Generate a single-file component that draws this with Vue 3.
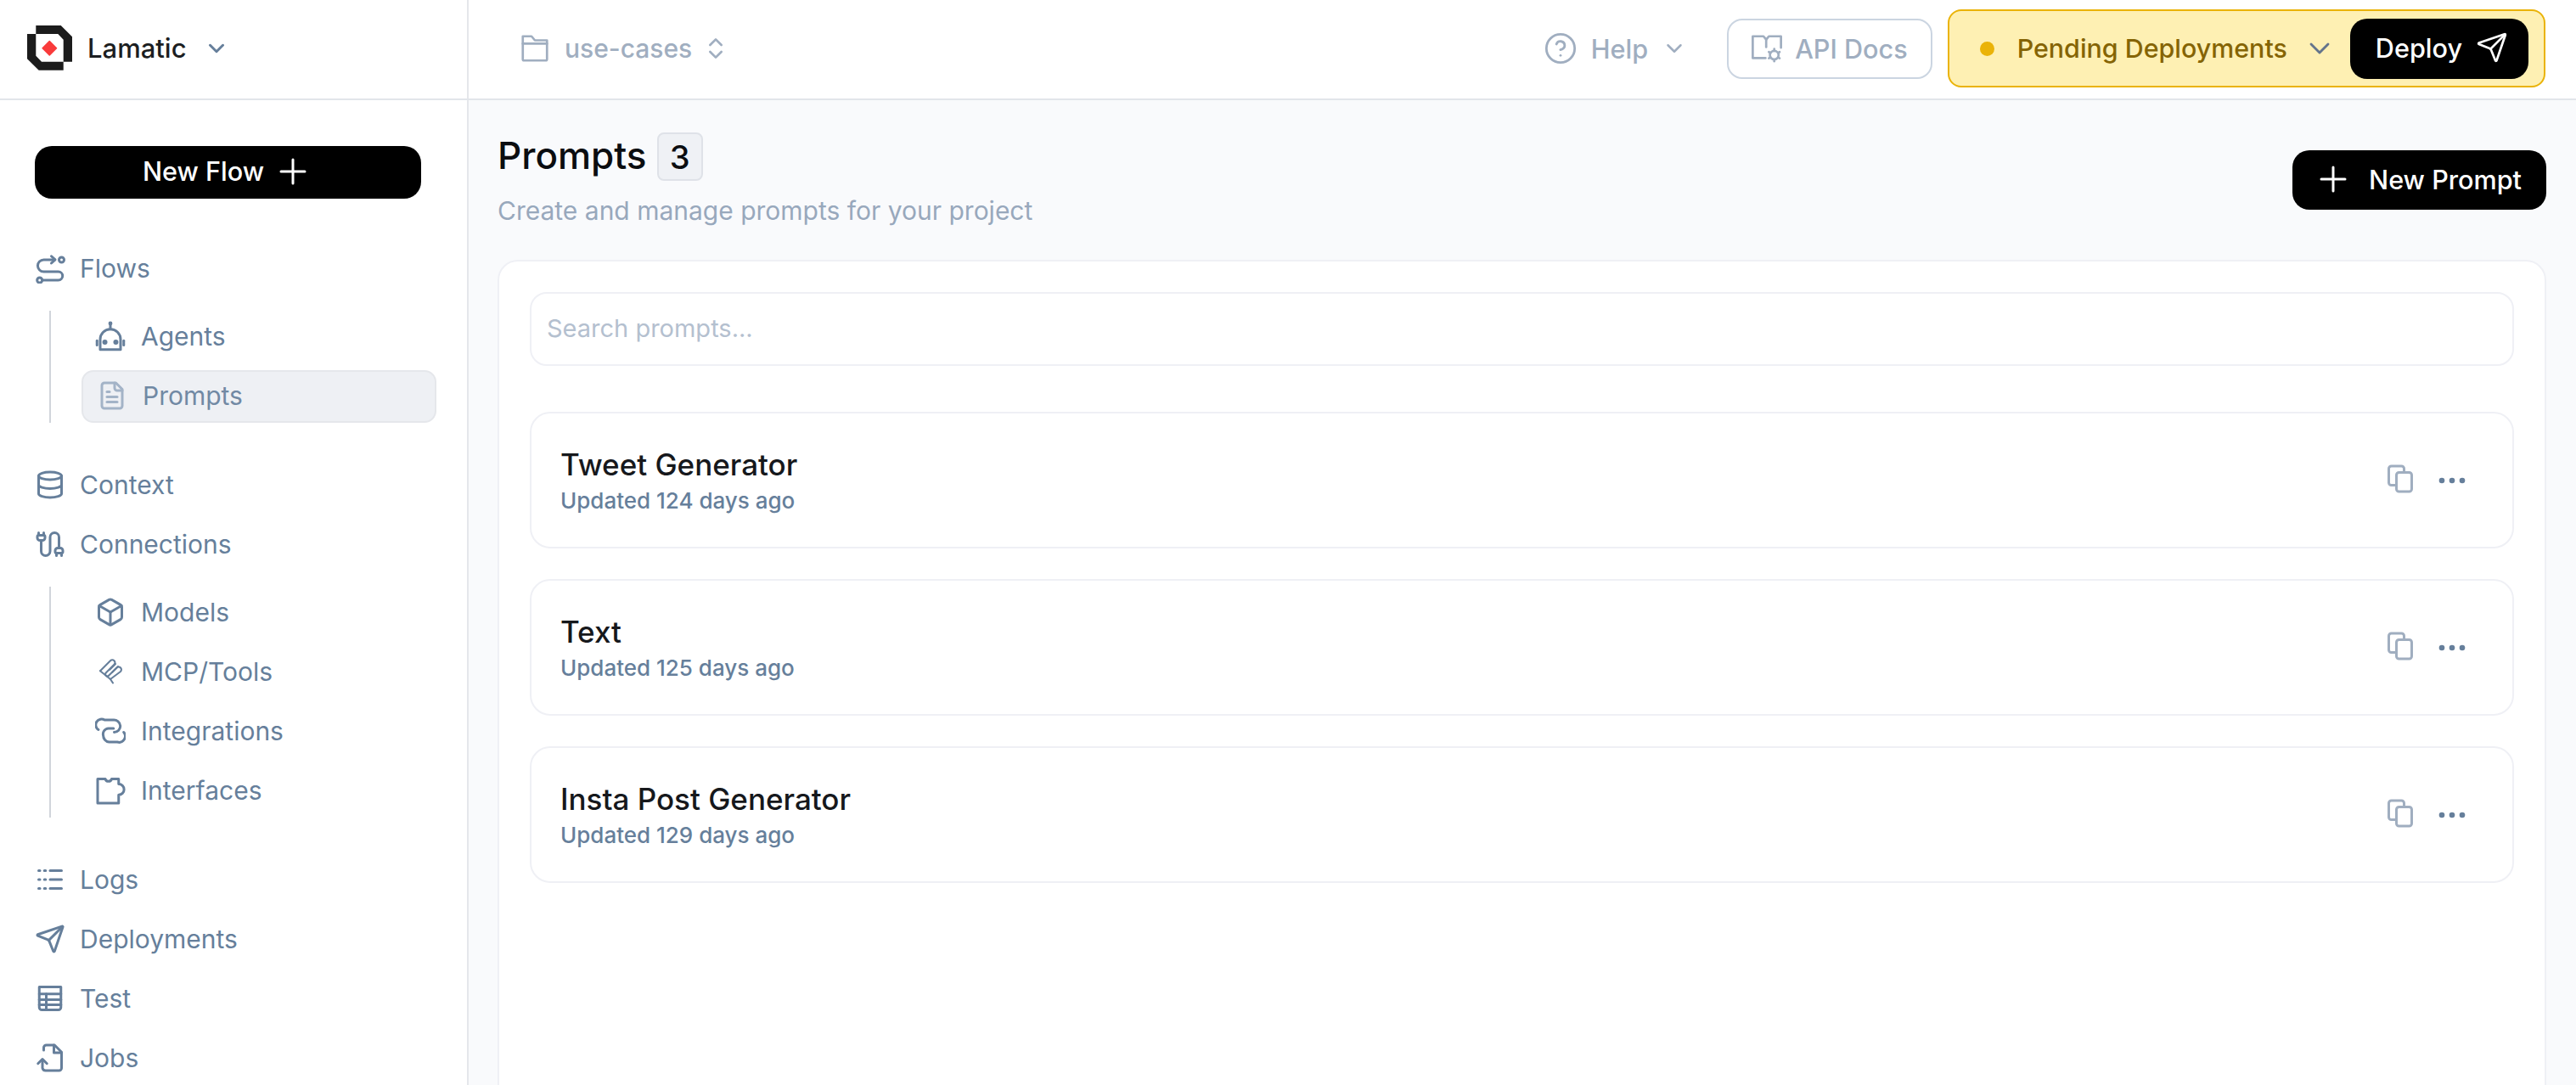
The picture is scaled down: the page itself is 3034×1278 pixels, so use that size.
<script setup>
import { h } from 'vue'

const paths = {
  flows: ['M15.5 5.3H7A4.7 4.7 0 0 0 7 14.7H18.5A3.3 3.3 0 0 1 18.5 21.3H6.5', 'M13 2.5 16 5.3 13 8', 'M23 5.3a2 2 0 1 1-4 0 2 2 0 0 1 4 0', 'M5.8 21.3a2 2 0 1 1-4 0 2 2 0 0 1 4 0'],
  bot: ['M4 22.5V14.5A8 8 0 0 1 20 14.5V22.5Z', 'M12 6.5V3', 'M12.6 2a.6.6 0 1 1-1.2 0 .6.6 0 0 1 1.2 0', 'M1.5 15.5V19', 'M22.5 15.5V19', 'M8.7 16.7a1 1 0 1 1-2 0 1 1 0 0 1 2 0', 'M17.3 16.7a1 1 0 1 1-2 0 1 1 0 0 1 2 0'],
  file: ['M15 2H6a2 2 0 0 0-2 2v16a2 2 0 0 0 2 2h12a2 2 0 0 0 2-2V7Z', 'M14 2v4a2 2 0 0 0 2 2h4', 'M10 9H8', 'M16 13H8', 'M16 17H8'],
  db: ['M21 5c0 1.66-4 3-9 3S3 6.66 3 5s4-3 9-3 9 1.34 9 3', 'M3 5V19A9 3 0 0 0 21 19V5', 'M3 12A9 3 0 0 0 21 12'],
  cable: ['M17 21v-2a1 1 0 0 1-1-1v-1a2 2 0 0 1 2-2h2a2 2 0 0 1 2 2v1a1 1 0 0 1-1 1', 'M19 15V6.5a1 1 0 0 0-7 0v11a1 1 0 0 1-7 0V9', 'M21 21v-2h-4', 'M3 5V3', 'M7 5V3', 'M7 5a1 1 0 0 1 1 1v1a2 2 0 0 1-2 2H4a2 2 0 0 1-2-2V6a1 1 0 0 1 1-1z'],
  box: ['M21 8a2 2 0 0 0-1-1.73l-7-4a2 2 0 0 0-2 0l-7 4A2 2 0 0 0 3 8v8a2 2 0 0 0 1 1.73l7 4a2 2 0 0 0 2 0l7-4A2 2 0 0 0 21 16Z', 'm3.3 7 8.7 5 8.7-5', 'M12 22V12'],
  mcp: ['M4 11.5 12 3.5a2.1 2.1 0 0 1 3 3L8.5 13a1.5 1.5 0 0 0 2.2 2.2L17 9a2.1 2.1 0 0 1 3 3L12 18', 'M4 11.5 12 18l2 3', 'M11.5 10.5 16 6', 'M13.5 12.5 18 8'],
  link: ['M2.6 11A4.5 4.5 0 0 1 7.5 3.4H14A5 5 0 0 1 19.8 8 4.8 4.8 0 0 1 15 13', 'M14.5 10H10.5A4.4 4.4 0 0 0 6.4 15.5 5.2 5.2 0 0 0 11 20.7H17.5A4.8 4.8 0 0 0 22.5 13'],
  puzzle: ['M2 3H8A2.6 2.6 0 0 0 13 3H18.5V7A4.2 4.2 0 0 1 18.5 15.5V22H2Z'],
  logs: ['M3 5h1', 'M7.5 5h1', 'M12 5h9', 'M3 12h1', 'M7.5 12h1', 'M12 12h9', 'M3 19h1', 'M7.5 19h1', 'M12 19h9'],
  send: ['M14.536 21.686a.5.5 0 0 0 .937-.024l6.5-19a.496.496 0 0 0-.635-.635l-19 6.5a.5.5 0 0 0-.024.937l7.93 3.18a2 2 0 0 1 1.112 1.11z', 'm21.854 2.147-10.94 10.939'],
  table: ['M3.5 3h17v16a2 2 0 0 1-2 2h-13a2 2 0 0 1-2-2z', 'M3.5 8.5h17', 'M3.5 13h17', 'M3.5 17h17', 'M9 8.5V21'],
  job: ['M7 6V4a2 2 0 0 1 2-2h6.5L21 7.5V20a2 2 0 0 1-2 2H8.5a2.5 2.5 0 0 1-2.5-2v-6', 'M15 2v6h6', 'M2.5 16.5 6 13l3.5 3.5'],
  chevron: ['m6 9 6 6 6-6'],
  updown: ['m7 15 5 5 5-5', 'm7 9 5-5 5 5'],
  folder: ['M3 3h6.5l2.5 3h9v14a1 1 0 0 1-1 1H4a1 1 0 0 1-1-1z', 'M3 8.5h18'],
  help: ['M22 12a10 10 0 1 1-20 0 10 10 0 0 1 20 0', 'M9.09 9a3 3 0 0 1 5.83 1c0 2-3 3-3 3', 'M12 17h.01'],
  docs: ['M11 19.2H1.5V3H9.5L11.5 5.5 13.5 3H22.5V11.5', 'M11.5 5.5V11', 'M20.7 17a3.2 3.2 0 1 1-6.4 0 3.2 3.2 0 0 1 6.4 0', 'M17.5 12.4v1.4', 'M17.5 20.2v1.4', 'M13.5 14.7l1.2.7', 'M20.3 18.6l1.2.7', 'M13.5 19.3l1.2-.7', 'M20.3 15.4l1.2-.7'],
  plus: ['M5 12h14', 'M12 5v14'],
  copy: ['M9 17H5a2 2 0 0 1-2-2V4a2 2 0 0 1 2-2h8a2 2 0 0 1 2 2v2', 'M11 7h8a2 2 0 0 1 2 2v11a2 2 0 0 1-2 2h-8a2 2 0 0 1-2-2V9a2 2 0 0 1 2-2'],
}

const Icon = (props) =>
  h(
    'svg',
    {
      width: props.size || 36,
      height: props.size || 36,
      viewBox: '0 0 24 24',
      fill: 'none',
      stroke: 'currentColor',
      'stroke-width': props.sw || 2,
      'stroke-linecap': 'round',
      'stroke-linejoin': 'round',
    },
    paths[props.name].map((d) => h('path', { d })),
  )
Icon.props = ['name', 'size', 'sw']

const prompts = [
  { name: 'Tweet Generator', age: 'Updated 124 days ago' },
  { name: 'Text', age: 'Updated 125 days ago' },
  { name: 'Insta Post Generator', age: 'Updated 129 days ago' },
]

const nav = [
  { label: 'Flows', icon: 'flows', sub: [{ label: 'Agents', icon: 'bot' }, { label: 'Prompts', icon: 'file', active: true }] },
  { label: 'Context', icon: 'db' },
  { label: 'Connections', icon: 'cable', sub: [{ label: 'Models', icon: 'box' }, { label: 'MCP/Tools', icon: 'mcp', sw: 1.4 }, { label: 'Integrations', icon: 'link' }, { label: 'Interfaces', icon: 'puzzle' }] },
  { label: 'Logs', icon: 'logs' },
  { label: 'Deployments', icon: 'send' },
  { label: 'Test', icon: 'table' },
  { label: 'Jobs', icon: 'job' },
]
</script>

<template>
  <div class="app">
    <header class="topbar">
      <div class="brand">
        <svg class="logo" width="53" height="53" viewBox="0 0 53 53">
          <path fill="#1c1c1c" fill-rule="evenodd" d="M10.3 0H39.7L53 13.3V42.7H42.7V52.7H13.7L0 39.3V10H10.3ZM10.3 10V35.7L17 42.7H42.7V16.7L36.3 10Z" />
          <path fill="#f93b3b" stroke="#f93b3b" stroke-width="1.5" stroke-linejoin="round" d="M26.3 18.5 34.5 26.7 26.3 34.9 18.1 26.7Z" />
        </svg>
        <span class="brand-name">Lamatic</span>
        <Icon class="brand-chevron" name="chevron" :size="30" :sw="2.4" />
      </div>
      <div class="bar">
        <Icon class="muted" name="folder" :size="38" :sw="1.7" />
        <span class="project muted">use-cases</span>
        <Icon class="muted" name="updown" :size="32" />
        <div class="bar-right">
          <div class="help muted">
            <Icon name="help" :size="40" :sw="1.7" />
            <span>Help</span>
            <Icon name="chevron" :size="30" />
          </div>
          <div class="api muted">
            <Icon name="docs" :size="38" :sw="1.7" />
            <span>API Docs</span>
          </div>
          <div class="pending">
            <span class="dot"></span>
            <span class="pending-text">Pending Deployments</span>
            <Icon class="pending-chevron" name="chevron" :size="40" :sw="1.7" />
            <button class="btn deploy">
              <span>Deploy</span>
              <Icon name="send" :size="38" :sw="1.7" />
            </button>
          </div>
        </div>
      </div>
    </header>

    <div class="body">
      <aside class="sidebar">
        <button class="btn new-flow">
          <span>New Flow</span>
          <Icon name="plus" :size="48" :sw="1.5" />
        </button>
        <nav class="nav">
          <template v-for="item in nav" :key="item.label">
            <div class="item">
              <Icon :name="item.icon" />
              <span>{{ item.label }}</span>
            </div>
            <div v-if="item.sub" class="sub">
              <div v-for="s in item.sub" :key="s.label" class="item sub-item" :class="{ active: s.active }">
                <Icon :name="s.icon" :sw="s.sw" />
                <span>{{ s.label }}</span>
              </div>
            </div>
          </template>
        </nav>
      </aside>

      <main class="main">
        <div class="page-head">
          <div>
            <div class="title-row">
              <h1>Prompts</h1>
              <span class="badge">3</span>
            </div>
            <p class="subtitle">Create and manage prompts for your project</p>
          </div>
          <button class="btn new-prompt">
            <Icon name="plus" :size="48" :sw="1.5" />
            <span>New Prompt</span>
          </button>
        </div>

        <section class="panel">
          <div class="search">Search prompts...</div>
          <div class="cards">
            <article v-for="p in prompts" :key="p.name" class="card">
              <div>
                <div class="card-title">{{ p.name }}</div>
                <div class="card-sub">{{ p.age }}</div>
              </div>
              <div class="actions">
                <Icon class="copy" name="copy" :size="36" />
                <svg width="32" height="8" viewBox="0 0 32 8" class="dots">
                  <circle cx="4" cy="4" r="3.3" />
                  <circle cx="16" cy="4" r="3.3" />
                  <circle cx="28" cy="4" r="3.3" />
                </svg>
              </div>
            </article>
          </div>
        </section>
      </main>
    </div>
  </div>
</template>

<style>
html, body { margin: 0; background: #fff; }
</style>

<style scoped>
.app {
  height: 100vh;
  display: flex;
  flex-direction: column;
  overflow: hidden;
  font-family: Inter, "Liberation Sans", sans-serif;
  color: #667f9b;
}
.topbar {
  flex: none;
  height: 118px;
  box-sizing: border-box;
  display: flex;
  background: #fff;
  border-bottom: 2px solid #e2e5ea;
}
.brand {
  width: 552px;
  box-sizing: border-box;
  padding: 0 0 3px 32px;
  display: flex;
  align-items: center;
  border-right: 2px solid #e5e7eb;
  flex: none;
}
.brand-name {
  margin-left: 18px;
  font-size: 31px;
  font-weight: 500;
  color: #1c1e21;
}
.brand-chevron { margin-left: 20px; color: #667f9b; }
.bar {
  flex: 1;
  display: flex;
  align-items: center;
  padding: 0 36px 2px 59px;
  min-width: 0;
}
.muted { color: #a0aec0; }
.project {
  font-size: 30px;
  font-weight: 500;
  margin: 0 12px 0 16px;
}
.bar-right {
  margin-left: auto;
  display: flex;
  align-items: center;
}
.help {
  display: flex;
  align-items: center;
  font-size: 30.6px;
  font-weight: 500;
  gap: 16px;
  margin-right: 47px;
}
.api {
  height: 71px;
  box-sizing: border-box;
  display: flex;
  align-items: center;
  gap: 14px;
  padding: 0 27px 0 26px;
  border: 2px solid #cbd5e1;
  border-radius: 18px;
  font-size: 30.6px;
  font-weight: 500;
  margin-right: 18px;
}
.pending {
  height: 92px;
  box-sizing: border-box;
  display: flex;
  align-items: center;
  padding: 0 18px 0 36px;
  background: #fef0b3;
  border: 2px solid #eab308;
  border-radius: 16px;
}
.dot {
  width: 17px;
  height: 17px;
  border-radius: 50%;
  background: #eab308;
}
.pending-text {
  margin-left: 27px;
  font-size: 30.4px;
  font-weight: 500;
  color: #856404;
}
.pending-chevron { margin: 0 16px 0 18px; color: #64748b; }
.btn {
  display: flex;
  align-items: center;
  justify-content: center;
  background: #000;
  color: #fff;
  border: 0;
  font-family: inherit;
  font-size: 30.6px;
  font-weight: 500;
}
.deploy {
  height: 71px;
  border-radius: 20px;
  padding: 0 24px 2px 30px;
  gap: 16px;
}
.body {
  flex: 1;
  display: flex;
  min-height: 0;
}
.sidebar {
  width: 552px;
  flex: none;
  box-sizing: border-box;
  padding: 54px 0 0 41px;
  background: #fff;
  border-right: 2px solid #e5e7eb;
}
.new-flow {
  width: 455px;
  height: 62px;
  padding: 0 0 3px;
  border-radius: 20px;
  gap: 10px;
}
.nav {
  margin-top: 51px;
  display: flex;
  flex-direction: column;
  gap: 8px;
}
.item {
  height: 62px;
  display: flex;
  align-items: center;
  gap: 17px;
  font-size: 30px;
}
.sub {
  margin: 11px 0 34px 17px;
  border-left: 2px solid #d1d5db;
  padding-left: 36px;
  width: 418px;
  display: flex;
  flex-direction: column;
  gap: 8px;
}
.sub-item {
  box-sizing: border-box;
  padding-left: 14px;
  padding-bottom: 2px;
  border: 2px solid transparent;
  border-radius: 14px;
  width: 418px;
  gap: 18px;
}
.sub-item.active {
  padding-left: 16px;
  background: #eef0f4;
  border-color: #e5e7eb;
  color: #7189a4;
}
.sub-item.active svg { color: #a3b3c7; }
.main {
  flex: 1;
  min-width: 0;
  box-sizing: border-box;
  padding: 38px 35px 0 34px;
  background: #f9fafc;
}
.page-head {
  display: flex;
  justify-content: space-between;
  align-items: center;
}
.title-row {
  display: flex;
  align-items: center;
  gap: 12px;
  height: 57px;
}
h1 {
  margin: 0;
  padding-bottom: 3px;
  font-size: 44px;
  font-weight: 500;
  color: #0b0d10;
}
.badge {
  width: 54px;
  height: 57px;
  box-sizing: border-box;
  display: flex;
  align-items: center;
  justify-content: center;
  background: #eff1f5;
  border: 2px solid #dfe2e8;
  border-radius: 8px;
  font-size: 38px;
  font-weight: 500;
  color: #0b0d10;
}
.subtitle {
  margin: 15px 0 0;
  line-height: 40px;
  font-size: 30px;
  color: #98a8bc;
}
.new-prompt {
  height: 70px;
  border-radius: 20px;
  padding: 0 29px 2px 24px;
  gap: 18px;
}
.panel {
  margin-top: 38px;
  min-height: 1100px;
  box-sizing: border-box;
  padding: 36px 36px 0;
  background: #fff;
  border: 2px solid #eff0f5;
  border-radius: 24px;
}
.search {
  height: 87px;
  box-sizing: border-box;
  display: flex;
  align-items: center;
  padding: 0 0 2px 18px;
  border: 2px solid #eff0f5;
  border-radius: 20px;
  font-size: 29px;
  color: #b4c0cf;
}
.cards {
  margin-top: 54px;
  display: flex;
  flex-direction: column;
  gap: 36px;
}
.card {
  height: 161px;
  box-sizing: border-box;
  display: flex;
  align-items: center;
  justify-content: space-between;
  padding: 0 55px 0 34px;
  border: 2px solid #eff0f5;
  border-radius: 24px;
}
.card-title {
  font-size: 35px;
  font-weight: 500;
  color: #16181c;
  line-height: 44px;
}
.card-sub {
  margin-top: 4px;
  font-size: 26px;
  font-weight: 500;
  color: #667f9b;
  line-height: 34px;
}
.actions {
  display: flex;
  align-items: center;
  gap: 27px;
}
.copy { color: #a0aec0; margin-bottom: 4px; }
.dots { fill: #667f9b; }
</style>
